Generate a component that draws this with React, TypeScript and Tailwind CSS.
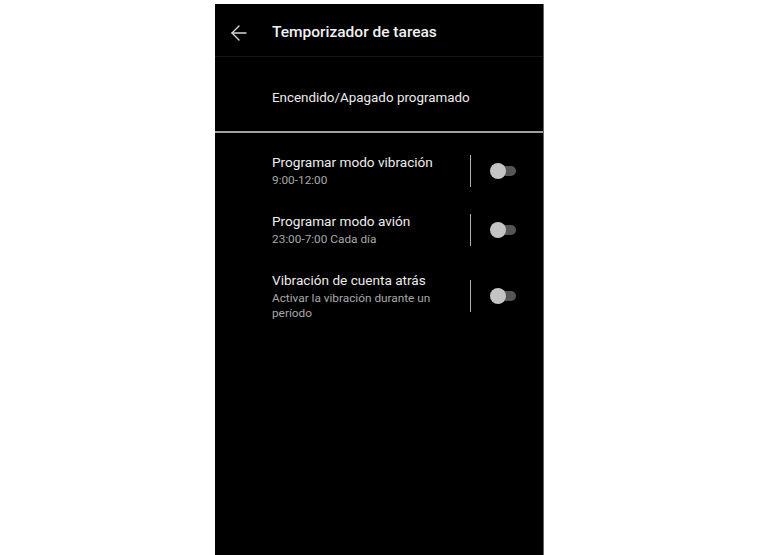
import React from "react";

function Toggle() {
  return (
    <div className="relative w-[26px] h-[16px]">
      <div className="absolute left-[3px] top-[3px] w-[23px] h-[10px] rounded-full bg-[#555555]" />
      <div className="absolute left-0 top-0 w-[16px] h-[16px] rounded-full bg-[#c4c4c4]" />
    </div>
  );
}

function Row({ title, sub }: { title: string; sub: string }) {
  return (
    <div className="flex items-center pl-[57px] py-[12px]">
      <div className="flex-1 min-w-0 pr-[9px]">
        <div className="text-[13.6px] leading-[18px] text-[#ececec]">{title}</div>
        <div className="mt-[2px] text-[11.8px] leading-[15px] text-[#a8a8a8]">{sub}</div>
      </div>
      <div className="w-px h-[32px] bg-[#b0b0b0]" />
      <div className="w-[72px] pl-[19px] flex items-center">
        <Toggle />
      </div>
    </div>
  );
}

export default function App() {
  return (
    <div
      className="w-[768px] h-[555px] bg-white overflow-hidden pt-[4px] pl-[215px]"
      style={{ fontFamily: "Roboto, 'Noto Sans', sans-serif" }}
    >
      <div className="w-[329px] h-[551px] bg-black border-r border-[#666]">
        <div className="h-[53px] flex items-center pt-[6px] border-b border-[#151515]">
          <div className="w-[57px] pl-[12px] flex items-center">
            <svg width="24" height="24" viewBox="0 0 24 24" fill="none" stroke="#d8d8d8" strokeWidth="1.4" strokeLinecap="round" strokeLinejoin="round">
              <path d="M19 12H5" />
              <path d="M12 19l-7-7 7-7" />
            </svg>
          </div>
          <div className="text-[15.5px] font-medium text-[#f2f2f2]">Temporizador de tareas</div>
        </div>
        <div className="h-[74px] flex items-center pt-[9px] pl-[57px]">
          <div className="text-[13.4px] text-[#ececec]">Encendido/Apagado programado</div>
        </div>
        <div className="h-[2px] bg-[#a0a0a0]" />
        <div className="pt-[8px]">
          <Row title="Programar modo vibración" sub="9:00-12:00" />
          <Row title="Programar modo avión" sub="23:00-7:00 Cada día" />
          <Row title="Vibración de cuenta atrás" sub="Activar la vibración durante un período" />
        </div>
      </div>
    </div>
  );
}
